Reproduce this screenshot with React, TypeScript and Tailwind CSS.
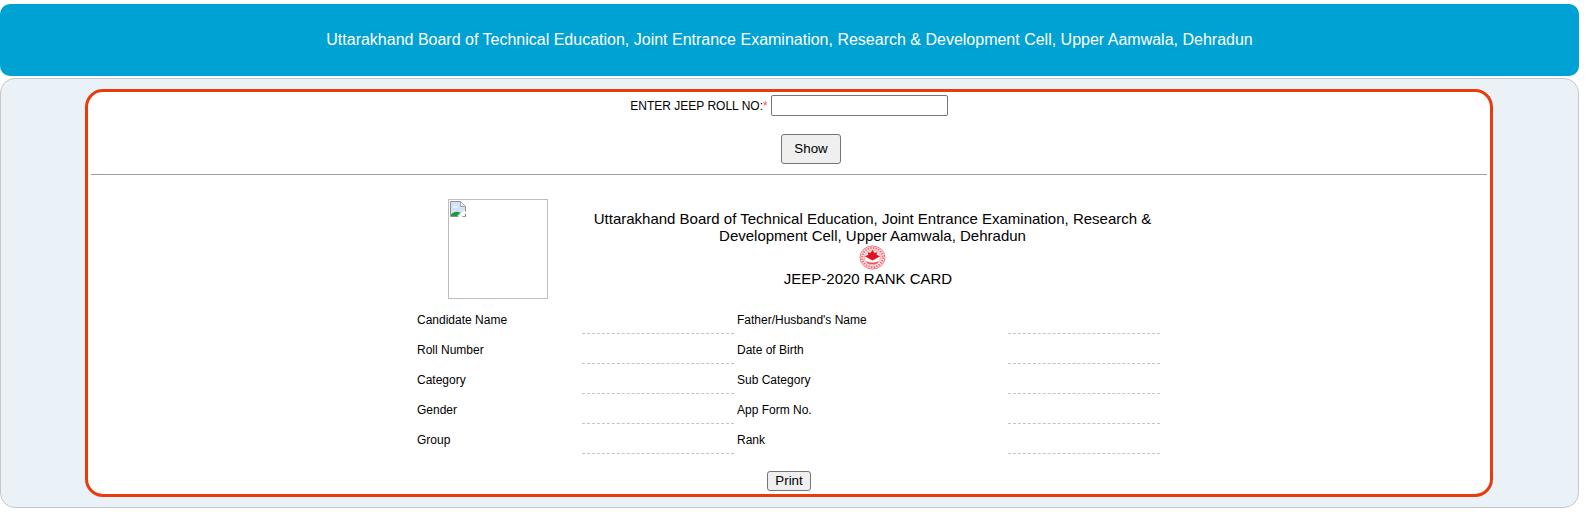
const rows = [
  ["Candidate Name", "Father/Husband's Name"],
  ["Roll Number", "Date of Birth"],
  ["Category", "Sub Category"],
  ["Gender", "App Form No."],
  ["Group", "Rank"],
];

function BrokenImage() {
  return (
    <svg width="16" height="16" viewBox="0 0 16 16" className="block">
      <path d="M0.5 0.5H10.5L15.5 5.5V15.5H0.5Z" fill="#d3e2f8" stroke="#8f8f8f" />
      <path d="M10.5 0.5V5.5H15.5Z" fill="#f4f4f4" stroke="#a8a8a8" />
      <path d="M3 6.5c0-1.2 1.4-1.6 2.2-1 1-.6 2.4 0 2.4 1z" fill="#fff" />
      <path d="M1 15v-1.5C3 11 6.5 10 9.5 11.2l1 .6L7 15z" fill="#1c9a3a" />
      <path d="M8 16l6-6.5 2 1.5v5z" fill="#fff" />
      <path d="M12.5 15.5h3V12.5" fill="none" stroke="#8f8f8f" />
    </svg>
  );
}

function Emblem() {
  return (
    <svg width="27" height="25" viewBox="0 0 27 27" preserveAspectRatio="none" className="block">
      <circle cx="13.5" cy="13.5" r="12.5" fill="#fde4e5" stroke="#f0727a" strokeWidth="1" />
      <circle cx="13.5" cy="13.5" r="10.3" fill="none" stroke="#f26a72" strokeWidth="2" strokeDasharray="1.5 1.2" />
      <circle cx="13.5" cy="13.5" r="8" fill="#fff" stroke="#f28a90" strokeWidth="0.8" />
      <path d="M13.5 5.5l2 3 2.8-.8-.7 2.8 3.6 1.6-7.7 4.6-7.7-4.6 3.6-1.6-.7-2.8 2.8.8z" fill="#e2141f" />
      <path d="M7.5 17.5c3.5 1.8 8.5 1.8 12 0l-.8 2.2c-3 1.3-7.4 1.3-10.4 0z" fill="#ee525c" />
    </svg>
  );
}

export default function App() {
  return (
    <div className="min-h-[513px] bg-white pt-1 pr-[7px] font-['Liberation_Sans',Arial,sans-serif] text-black">
      <header className="flex h-[72px] items-center justify-center rounded-[10px] bg-[#00a2d3] text-base text-white">
        Uttarakhand Board of Technical Education, Joint Entrance Examination, Research &amp; Development Cell, Upper Aamwala, Dehradun
      </header>

      <main className="mt-0.5 h-[430px] rounded-[15px] border border-[#c4c8cc] bg-[#eaf2f8] pt-2.5 pl-[84px] pr-[85px]">
        <section className="flex h-[408px] flex-col rounded-[18px] border-[3px] border-[#e93b0b] bg-white px-[3px]">
          <div className="mt-[3px] flex h-[21px] items-center justify-center text-xs">
            <span>ENTER JEEP ROLL NO:</span>
            <span className="text-[#ff4d6d]">*</span>
            <input
              type="text"
              className="ml-[3px] h-[21px] w-[177px] rounded-[2px] border border-[#767676] bg-white"
            />
          </div>

          <div className="mt-[18px] flex justify-center pl-11">
            <button className="h-[30px] w-[60px] rounded-[3px] border border-[#767676] bg-[#efefef] text-[13.33px]">
              Show
            </button>
          </div>

          <hr className="mt-[10px] border-t border-[#a0a0a0]" />

          <div className="mt-6 flex self-start pl-[357px]">
            <div className="h-[100px] w-[100px] border border-[#bdbdbd] p-px">
              <BrokenImage />
            </div>
            <div className="ml-[41px] flex w-[567px] flex-col items-center pt-[11px] text-center text-[15px] leading-[17px]">
              <div>
                Uttarakhand Board of Technical Education, Joint Entrance Examination, Research &amp; Development Cell, Upper Aamwala, Dehradun
              </div>
              <div className="mt-px">
                <Emblem />
              </div>
              <div className="pr-[9px]">JEEP-2020 RANK CARD</div>
            </div>
          </div>

          <div className="mt-[5px] grid grid-cols-[165px_152px_274px_152px] self-start pl-[326px] text-xs">
            {rows.map((r) => (
              <div key={r[0]} className="col-span-4 grid h-[30px] grid-cols-subgrid items-center">
                <span className="pt-[2px]">{r[0]}</span>
                <span className="h-full border-b border-dashed border-[#c4c4c4]" />
                <span className="pl-[3px] pt-[2px]">{r[1]}</span>
                <span className="h-full border-b border-dashed border-[#c4c4c4]" />
              </div>
            ))}
          </div>

          <div className="mt-[17px] flex justify-center">
            <button className="h-5 w-[44px] rounded-[3px] border border-[#767676] bg-[#efefef] text-[13.33px] leading-none">
              Print
            </button>
          </div>
        </section>
      </main>
    </div>
  );
}
